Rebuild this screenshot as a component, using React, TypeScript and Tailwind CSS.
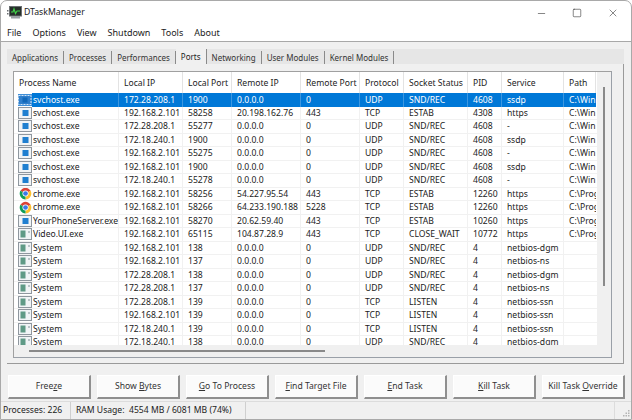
import React from 'react';
import { Minus, Square, X } from 'lucide-react';

const font = "font-['Noto_Sans','Open_Sans',sans-serif]";

const columns = [
  { title: 'Process Name', width: 'w-[105px]' },
  { title: 'Local IP', width: 'w-[64px]' },
  { title: 'Local Port', width: 'w-[49px]' },
  { title: 'Remote IP', width: 'w-[69px]' },
  { title: 'Remote Port', width: 'w-[59px]' },
  { title: 'Protocol', width: 'w-[44px]' },
  { title: 'Socket Status', width: 'w-[64px]' },
  { title: 'PID', width: 'w-[34px]' },
  { title: 'Service', width: 'w-[62px]' },
  { title: 'Path', width: 'w-[32px]' },
];

type Kind = 'svc' | 'chrome' | 'sys';
type Row = { kind: Kind; cells: string[] };

const win = 'C:\\Win';
const prog = 'C:\\Prog';
const udp = ['0.0.0.0', '0', 'UDP', 'SND/REC', '4608'];
const sysUdp = ['0.0.0.0', '0', 'UDP', 'SND/REC', '4'];
const sysTcp = ['0.0.0.0', '0', 'TCP', 'LISTEN', '4'];

const rows: Row[] = [
  { kind: 'svc', cells: ['svchost.exe', '172.28.208.1', '1900', ...udp, 'ssdp', win] },
  { kind: 'svc', cells: ['svchost.exe', '192.168.2.101', '58258', '20.198.162.76', '443', 'TCP', 'ESTAB', '4308', 'https', win] },
  { kind: 'svc', cells: ['svchost.exe', '172.28.208.1', '55277', ...udp, '-', win] },
  { kind: 'svc', cells: ['svchost.exe', '172.18.240.1', '1900', ...udp, 'ssdp', win] },
  { kind: 'svc', cells: ['svchost.exe', '192.168.2.101', '55275', ...udp, '-', win] },
  { kind: 'svc', cells: ['svchost.exe', '192.168.2.101', '1900', ...udp, 'ssdp', win] },
  { kind: 'svc', cells: ['svchost.exe', '172.18.240.1', '55278', ...udp, '-', win] },
  { kind: 'chrome', cells: ['chrome.exe', '192.168.2.101', '58256', '54.227.95.54', '443', 'TCP', 'ESTAB', '12260', 'https', prog] },
  { kind: 'chrome', cells: ['chrome.exe', '192.168.2.101', '58266', '64.233.190.188', '5228', 'TCP', 'ESTAB', '12260', 'https', prog] },
  { kind: 'svc', cells: ['YourPhoneServer.exe', '192.168.2.101', '58270', '20.62.59.40', '443', 'TCP', 'ESTAB', '10260', 'https', prog] },
  { kind: 'sys', cells: ['Video.UI.exe', '192.168.2.101', '65115', '104.87.28.9', '443', 'TCP', 'CLOSE_WAIT', '10772', 'https', prog] },
  { kind: 'sys', cells: ['System', '192.168.2.101', '138', ...sysUdp, 'netbios-dgm', ''] },
  { kind: 'sys', cells: ['System', '192.168.2.101', '137', ...sysUdp, 'netbios-ns', ''] },
  { kind: 'sys', cells: ['System', '172.28.208.1', '138', ...sysUdp, 'netbios-dgm', ''] },
  { kind: 'sys', cells: ['System', '172.28.208.1', '137', ...sysUdp, 'netbios-ns', ''] },
  { kind: 'sys', cells: ['System', '172.28.208.1', '139', ...sysTcp, 'netbios-ssn', ''] },
  { kind: 'sys', cells: ['System', '192.168.2.101', '139', ...sysTcp, 'netbios-ssn', ''] },
  { kind: 'sys', cells: ['System', '172.18.240.1', '139', ...sysTcp, 'netbios-ssn', ''] },
  { kind: 'sys', cells: ['System', '172.18.240.1', '138', ...sysUdp, 'netbios-dgm', ''] },
];

const tabs = ['Applications', 'Processes', 'Performances', 'Ports', 'Networking', 'User Modules', 'Kernel Modules'];

// one letter of each is underlined like a windows accelerator
const buttons: { pre: string; key: string; post: string }[] = [
  { pre: 'Free', key: 'z', post: 'e' },
  { pre: 'Show\u00a0', key: 'B', post: 'ytes' },
  { pre: '', key: 'G', post: 'o To Process' },
  { pre: '', key: 'F', post: 'ind Target File' },
  { pre: '', key: 'E', post: 'nd Task' },
  { pre: '', key: 'K', post: 'ill Task' },
  { pre: 'Kill Task\u00a0', key: 'O', post: 'verride' },
];

function ProcIcon({ kind, selected }: { kind: Kind; selected: boolean }) {
  if (kind === 'chrome') {
    return (
      <svg viewBox="0 0 24 24" className="w-[13px] h-[13px] mx-[0.5px] shrink-0">
        <path d="M12 12 L2.5 7 A11 11 0 0 1 21.5 7 Z" fill="#db4437" />
        <path d="M12 12 L21.5 7 A11 11 0 0 1 12 23 Z" fill="#fbc02d" />
        <path d="M12 12 L12 23 A11 11 0 0 1 2.5 7 Z" fill="#0f9d58" />
        <circle cx="12" cy="12" r="5.6" fill="#fff" />
        <circle cx="12" cy="12" r="4.3" fill="#3b78e7" />
      </svg>
    );
  }
  if (selected) {
    return (
      <svg viewBox="0 0 14 12" className="w-[14px] h-[12px] shrink-0">
        <rect x="0" y="0" width="14" height="12" fill="#3f8fd8" />
        <rect x="0.5" y="1.5" width="12.5" height="9" fill="#2f7fcc" stroke="#d5e6f6" strokeDasharray="2 1" />
        <rect x="4.5" y="3.5" width="5" height="5" fill="#1268b8" />
      </svg>
    );
  }
  return (
    <svg viewBox="0 0 14 12" className="w-[14px] h-[12px] shrink-0">
      <rect x="0.5" y="0.5" width="13" height="11" fill="#f1f4f6" stroke="#8f979f" />
      {kind === 'svc' ? (
        <rect x="4.5" y="3" width="6" height="6" fill="#1f7fd0" />
      ) : (
        <>
          <rect x="2.5" y="2.5" width="5" height="7" fill="#5f9a86" />
          <rect x="10" y="3" width="2" height="2" fill="#b9c4c8" />
        </>
      )}
    </svg>
  );
}

function AppIcon() {
  return (
    <svg viewBox="0 0 16 14" className="w-[16px] h-[14px]">
      <rect x="2.5" y="0.5" width="12" height="9.5" fill="#26302a" stroke="#6b6f72" />
      <path d="M4 6 L6 6 L7 3 L8.5 7.5 L10 5 L13 5" fill="none" stroke="#43d14a" strokeWidth="1.2" />
      <rect x="4" y="10" width="9" height="2.5" fill="#9aa0a4" />
      <rect x="0" y="4" width="1.5" height="1.5" fill="#6b6f72" />
      <rect x="0" y="7" width="1.5" height="1.5" fill="#6b6f72" />
    </svg>
  );
}

function Grip() {
  return (
    <svg viewBox="0 0 10 10" className="w-[10px] h-[10px] absolute right-[0px] bottom-[0px]">
      <g fill="#b4b4b4">
        <rect x="7" y="1" width="1.5" height="1.5" />
        <rect x="4.5" y="3.5" width="1.5" height="1.5" />
        <rect x="7" y="3.5" width="1.5" height="1.5" />
        <rect x="2" y="6" width="1.5" height="1.5" />
        <rect x="4.5" y="6" width="1.5" height="1.5" />
        <rect x="7" y="6" width="1.5" height="1.5" />
      </g>
    </svg>
  );
}

export default function App() {
  return (
    <div className={`${font} w-[632px] h-[420px] overflow-hidden bg-white text-[8.6px] text-[#222]`}>
      <div className="w-[632px] h-[420px] flex flex-col rounded-t-[7px] border border-[#a9a9a9] bg-white overflow-hidden">
        {/* title bar */}
        <div className="h-[24px] flex items-center shrink-0 pl-[6px]">
          <AppIcon />
          <span className="ml-[1px] text-[8.7px]">DTaskManager</span>
          <div className="ml-auto flex items-center">
            <div className="w-[36px] flex justify-center"><Minus className="w-[11px] h-[11px]" strokeWidth={1.2} /></div>
            <div className="w-[36px] flex justify-center"><Square className="w-[10px] h-[10px]" strokeWidth={1.3} /></div>
            <div className="w-[36px] flex justify-center"><X className="w-[12px] h-[12px]" strokeWidth={1.1} /></div>
          </div>
        </div>
        {/* menu */}
        <div className="h-[17px] flex items-center shrink-0 pl-[6px] gap-[11px] border-b border-[#a8a8a8] text-[9px]">
          {['File', 'Options', 'View', 'Shutdown', 'Tools', 'About'].map((m) => (
            <span key={m}>{m}</span>
          ))}
        </div>

        <div className="flex-1 flex flex-col bg-[#f0f0f0] min-h-0">
          {/* tab panel */}
          <div className="ml-[6px] mr-[7px] mt-[7px] flex flex-col h-[315px]">
            <div className="h-[15px] flex items-end bg-[#e6e6e6] shrink-0 leading-[13px] text-[8px]">
              {tabs.map((t) => (
                <div
                  key={t}
                  className={
                    t === 'Ports'
                      ? 'h-[15px] px-[5px] bg-[#f0f0f0] border-r border-[#8a8a8a] flex items-center whitespace-nowrap'
                      : 'h-[13px] px-[5px] border-r border-[#8a8a8a] flex items-center whitespace-nowrap text-[#333]'
                  }
                >
                  {t}
                </div>
              ))}
            </div>
            <div className="flex-1 pl-[6px] pr-[11px] pb-[5px] pt-[7px] border-r border-b border-[#9a9a9a] min-h-0 flex">
              {/* list */}
              <div className="flex-1 flex flex-col border border-[#a0a0a0] border-r-[#9aa0a8] border-b-[#9aa0a8] bg-[#f0f0f0] min-h-0">
                <div className="h-[273px] flex min-h-0">
                  <div className="w-[583px] flex flex-col bg-white overflow-hidden">
                    <div className="h-[21px] flex shrink-0">
                      {columns.map((c) => (
                        <div key={c.title} className={`${c.width} shrink-0 px-[5px] pt-[2px] flex items-center border-r border-[#e3e3e3] whitespace-nowrap overflow-hidden`}>
                          {c.title}
                        </div>
                      ))}
                    </div>
                    {rows.map((row, i) => (
                      <div
                        key={i}
                        className={i === 0 ? 'h-[13.5px] shrink-0 flex text-white' : 'h-[13.5px] shrink-0 flex border-b border-[#f1f1f1]'}
                      >
                        {row.cells.map((cell, j) => (
                          <div
                            key={j}
                            className={`${columns[j].width} shrink-0 flex items-center whitespace-nowrap overflow-hidden leading-[13px] ${j === 0 ? 'pl-[4px]' : 'pl-[5px] pt-[1px]'} ${j === 9 ? '' : 'border-r'} ${i === 0 ? 'border-[#3d97e0]' : 'border-[#f1f1f1]'} ${i === 0 && j > 0 ? 'bg-[#0078d7]' : ''}`}
                          >
                            {j === 0 && <ProcIcon kind={row.kind} selected={i === 0} />}
                            {j === 0 ? (
                              <span className={`flex-1 h-full pl-[1px] pt-[1px] flex items-center ${i === 0 ? 'bg-[#0078d7]' : ''}`}>{cell}</span>
                            ) : (
                              <span>{cell}</span>
                            )}
                          </div>
                        ))}
                      </div>
                    ))}
                  </div>
                  <div className="flex-1 flex justify-center pt-[15px] pb-[59px]">
                    <div className="w-[2px] bg-[#8a8a8a]" />
                  </div>
                </div>
                <div className="flex-1 flex items-center pl-[15px]">
                  <div className="w-[296px] h-[2px] bg-[#8a8a8a]" />
                </div>
              </div>
            </div>
          </div>

          {/* buttons */}
          <div className="flex gap-[6px] pl-[7px] mt-[11px] shrink-0">
            {buttons.map((b) => (
              <div
                key={b.key + b.post}
                className="w-[83px] h-[24px] flex items-center justify-center whitespace-nowrap bg-[#fbfbfb] border-r-2 border-b-2 border-[#8f8f8f] border-t border-l border-t-white border-l-white text-[#333]"
              >
                {b.pre}
                <span className="underline">{b.key}</span>
                {b.post}
              </div>
            ))}
          </div>

          {/* status bar */}
          <div className="relative mt-auto h-[18px] flex items-center border-t border-[#dcdcdc] shrink-0 whitespace-nowrap">
            <div className="w-[70px] pl-[2px] border-r border-[#cfcfcf] h-full flex items-center">Processes: 226</div>
            <div className="w-[175px] pl-[5px] border-r border-[#cfcfcf] h-full flex items-center">RAM Usage:&nbsp; 4554 MB / 6081 MB (74%)</div>
            <div className="w-[369px] border-r border-[#dcdcdc] h-full" />
            <Grip />
          </div>
        </div>
      </div>
    </div>
  );
}
